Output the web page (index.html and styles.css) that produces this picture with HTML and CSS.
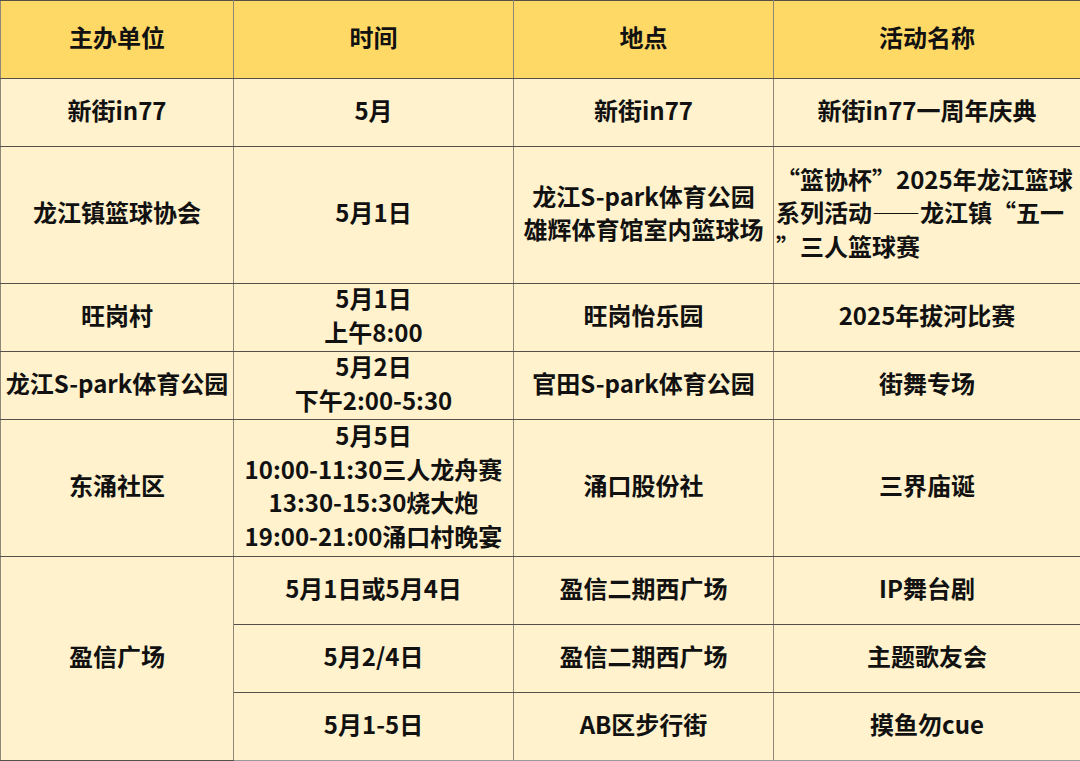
FILE: index.html
```html
<!DOCTYPE html>
<html lang="zh">
<head>
<meta charset="utf-8">
<link rel="stylesheet" href="styles.css">
</head>
<body>
<table class="sched">
  <colgroup>
    <col class="c1"><col class="c2"><col class="c3"><col class="c4">
  </colgroup>
  <thead>
    <tr class="h-head">
      <th><span class="t">主办单位</span></th><th><span class="t">时间</span></th><th><span class="t">地点</span></th><th><span class="t">活动名称</span></th>
    </tr>
  </thead>
  <tbody>
    <tr class="h1">
      <td><span class="t">新街in77</span></td><td><span class="t">5月</span></td><td><span class="t">新街in77</span></td><td><span class="t">新街in77一周年庆典</span></td>
    </tr>
    <tr class="h2">
      <td><span class="t">龙江镇篮球协会</span></td><td><span class="t">5月1日</span></td><td><span class="t">龙江S-park体育公园<br>雄辉体育馆室内篮球场</span></td>
      <td class="left"><span class="t">“篮协杯”2025年龙江篮球<br>系列活动——龙江镇“五一<br>”三人篮球赛</span></td>
    </tr>
    <tr class="h1">
      <td><span class="t">旺岗村</span></td><td><span class="t">5月1日<br>上午8:00</span></td><td><span class="t">旺岗怡乐园</span></td><td><span class="t">2025年拔河比赛</span></td>
    </tr>
    <tr class="h1">
      <td><span class="t">龙江S-park体育公园</span></td><td><span class="t">5月2日<br>下午2:00-5:30</span></td><td><span class="t">官田S-park体育公园</span></td><td><span class="t">街舞专场</span></td>
    </tr>
    <tr class="h2">
      <td><span class="t">东涌社区</span></td><td><span class="t">5月5日<br>10:00-11:30三人龙舟赛<br>13:30-15:30烧大炮<br>19:00-21:00涌口村晚宴</span></td><td><span class="t">涌口股份社</span></td><td><span class="t">三界庙诞</span></td>
    </tr>
    <tr class="h1">
      <td rowspan="3"><span class="t">盈信广场</span></td><td><span class="t">5月1日或5月4日</span></td><td><span class="t">盈信二期西广场</span></td><td><span class="t">IP舞台剧</span></td>
    </tr>
    <tr class="h1">
      <td><span class="t">5月2/4日</span></td><td><span class="t">盈信二期西广场</span></td><td><span class="t">主题歌友会</span></td>
    </tr>
    <tr class="h1">
      <td><span class="t">5月1-5日</span></td><td><span class="t">AB区步行街</span></td><td><span class="t">摸鱼勿cue</span></td>
    </tr>
  </tbody>
</table>
</body>
</html>
```
FILE: styles.css
```css
html, body {
  margin: 0;
  padding: 0;
  background: #ffffff;
}
.sched {
  width: 1080px;
  table-layout: fixed;
  border-collapse: collapse;
  font-family: "Noto Sans CJK SC", "Noto Sans", sans-serif;
  font-weight: 700;
  font-size: 24px;
  line-height: 33.5px;
  color: #111111;
}
.c1 { width: 233px; }
.c2 { width: 280px; }
.c3 { width: 260px; }
.c4 { width: 307px; }
.sched th,
.sched td {
  text-align: center;
  vertical-align: middle;
  padding: 0;
  border-top: 1px solid #555049;
  border-bottom: 1px solid #555049;
  border-left: 1px solid #8f8778;
  border-right: 1px solid #8f8778;
  white-space: nowrap;
}
.sched th {
  background: #ffd966;
  font-weight: 700;
}
.sched td {
  background: #fff2cc;
}
.t {
  display: block;
  margin-top: -3px;
  margin-bottom: 3px;
}
.sched td.left {
  text-align: left;
  padding-left: 2px;
}
.h-head { height: 78px; }
.h1 { height: 68px; }
.h2 { height: 137px; }
.sched tbody tr:last-child td { border-bottom-color: #999999; }
```
